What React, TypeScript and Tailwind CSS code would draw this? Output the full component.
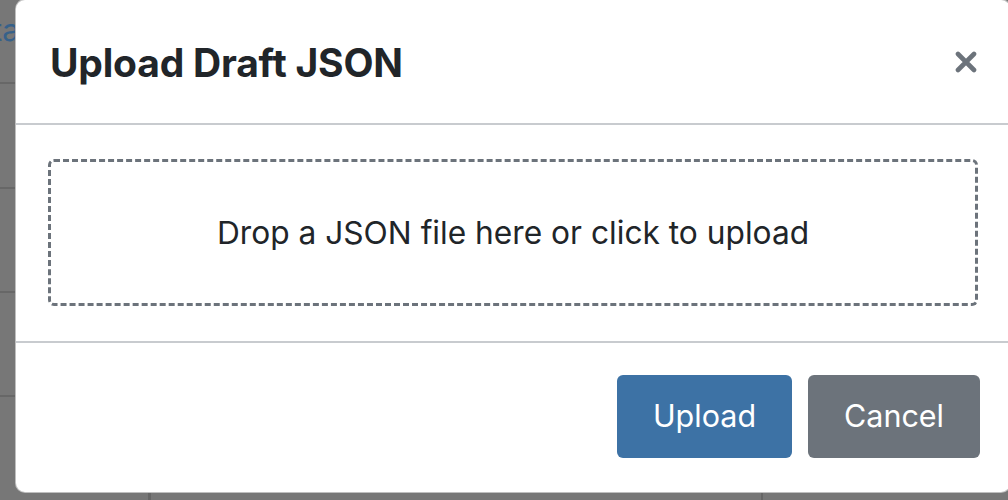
export default function App() {
  return (
    <div className="relative w-[1008px] h-[500px] overflow-hidden bg-[#777777] font-['Inter','Liberation_Sans',sans-serif]">
      {/* page content behind the backdrop */}
      <div className="flex flex-col">
        <div className="h-[84px] border-b-2 border-[#676767] pt-[10px] pl-0">
          <div className="ml-[-8px] text-[31px] leading-[40px] text-[#36618a]">ta</div>
        </div>
        <div className="h-[105px] border-b-2 border-[#676767]" />
        <div className="h-[104px] border-b-2 border-[#676767]" />
        <div className="h-[104px] border-b-2 border-[#676767]" />
      </div>
      <div className="absolute left-[148px] top-[480px] bottom-0 w-[3px] bg-[#666666]" />
      <div className="absolute left-[761px] top-[480px] bottom-0 w-[2px] bg-[#666666]" />

      {/* modal */}
      <div className="absolute left-[15px] top-[-1px] w-[996px] h-[494px] bg-white border border-black/25 rounded-[10px] flex flex-col text-[#212529]">
        <div className="h-[125px] shrink-0 border-b-2 border-[#c8cbcf] flex items-center justify-between pl-[34px] pr-[33px] pt-[1px]">
          <h5 className="text-[39px] font-bold leading-none tracking-[-0.2px]">Upload Draft JSON</h5>
          <svg width="22" height="22" viewBox="0 0 22 22" className="text-[#6c737b]">
            <path d="M3 3 L19 19 M19 3 L3 19" stroke="currentColor" strokeWidth="4.6" strokeLinecap="round" />
          </svg>
        </div>
        <div className="h-[218px] shrink-0 border-b-2 border-[#c8cbcf] px-[32px] pt-[34px] pb-[35px]">
          <div className="h-full rounded-[6px] border-[3px] border-dashed border-[#6c737b] flex items-center justify-center">
            <span className="text-[31.7px] leading-none">Drop a JSON file here or click to upload</span>
          </div>
        </div>
        <div className="flex-1 flex justify-end items-start gap-[16px] pt-[32px] pr-[30px]">
          <button className="w-[175px] h-[83px] rounded-[6px] bg-[#3d72a5] text-white text-[30.5px] leading-none">Upload</button>
          <button className="w-[172px] h-[83px] rounded-[6px] bg-[#6c737b] text-white text-[30.5px] leading-none">Cancel</button>
        </div>
      </div>
    </div>
  );
}
